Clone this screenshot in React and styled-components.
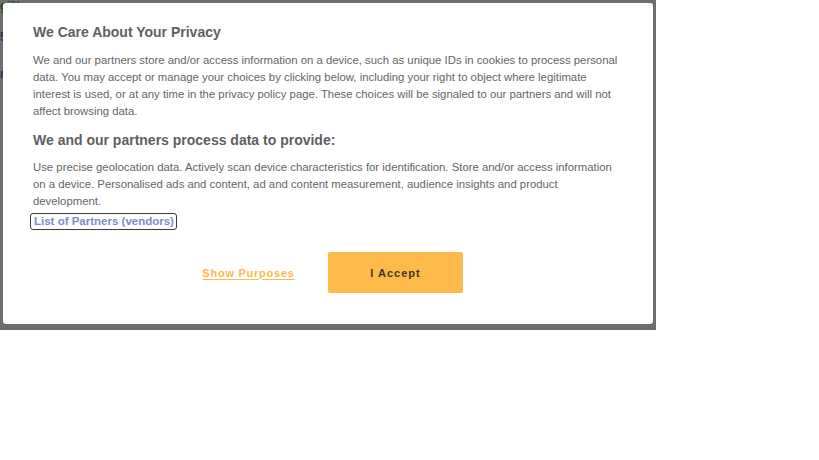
import React from "react";
import styled, { createGlobalStyle } from "styled-components";

const Global = createGlobalStyle`
  html, body { margin: 0; padding: 0; background: #fff; }
  body { font-family: "Liberation Sans", Arial, sans-serif; }
`;

const Page = styled.div`
  position: relative;
  width: 656px;
  height: 330px;
  overflow: hidden;
  background: #fff;
`;

const BehindText = styled.span`
  position: absolute;
  left: ${(p) => p.$x}px;
  top: ${(p) => p.$y}px;
  color: ${(p) => p.$color};
  font-size: ${(p) => p.$size}px;
  font-weight: bold;
  line-height: 1;
`;

const Overlay = styled.div`
  position: absolute;
  inset: 0;
  background: rgba(26, 30, 30, 0.64);
  padding: 3px 3px 6px 3px;
  box-sizing: border-box;
  display: flex;
`;

const Modal = styled.div`
  flex: 1;
  background: #fff;
  border-radius: 3px;
  padding: 20px 30px 0 30px;
  color: #656565;
`;

const Heading = styled.h2`
  margin: ${(p) => p.$m || 0};
  font-size: 14px;
  font-weight: bold;
  line-height: 18px;
  color: #5f5f5f;
`;

const Para = styled.p`
  margin: ${(p) => p.$m};
  font-size: 11.35px;
  line-height: 17px;
  color: #656565;
`;

const PartnersLink = styled.a`
  display: inline-block;
  margin-left: -3px;
  padding: 0 2px 0 3px;
  border: 1px solid #3a3a3a;
  border-radius: 3px;
  font-size: 11.5px;
  font-weight: bold;
  line-height: 15px;
  color: #7b8bd0;
  text-decoration: none;
`;

const Actions = styled.div`
  display: flex;
  justify-content: center;
  align-items: center;
  gap: 12px;
  margin-top: 22px;
  padding-right: 12px;
`;

const TextButton = styled.button`
  width: 135px;
  height: 41px;
  border: none;
  background: none;
  font-family: "Liberation Sans", Arial, sans-serif;
  font-size: 11px;
  font-weight: bold;
  letter-spacing: 0.75px;
  color: #fdb94a;
  text-decoration: underline;
  text-underline-offset: 2px;
  padding: 0;
`;

const AcceptButton = styled.button`
  width: 135px;
  height: 41px;
  border: none;
  border-radius: 2px;
  background: #fdb94a;
  font-family: "Liberation Sans", Arial, sans-serif;
  font-size: 11px;
  font-weight: bold;
  letter-spacing: 1px;
  color: #3b3424;
  padding: 0;
`;

export default function App() {
  return (
    <>
      <Global />
      <Page>
        <BehindText $x={0} $y={0} $color="#2a9a2a" $size={12}>gi%</BehindText>
        <BehindText $x={0} $y={31} $color="#2b5fae" $size={12}>5</BehindText>
        <BehindText $x={0} $y={68} $color="#2b5fae" $size={12}>r</BehindText>
        <Overlay>
          <Modal>
            <Heading>We Care About Your Privacy</Heading>
            <Para $m="11px 0 0 0">
              We and our partners store and/or access information on a device, such as unique IDs in cookies to process personal data. You may accept or manage your choices by clicking below, including your right to object where legitimate interest is used, or at any time in the privacy policy page. These choices will be signaled to our partners and will not affect browsing data.
            </Para>
            <Heading as="h3" $m="11px 0 0 0">We and our partners process data to provide:</Heading>
            <Para $m="10px 0 1px 0">
              Use precise geolocation data. Actively scan device characteristics for identification. Store and/or access information on a device. Personalised ads and content, ad and content measurement, audience insights and product development.
            </Para>
            <PartnersLink href="#">List of Partners (vendors)</PartnersLink>
            <Actions>
              <TextButton>Show Purposes</TextButton>
              <AcceptButton>I Accept</AcceptButton>
            </Actions>
          </Modal>
        </Overlay>
      </Page>
    </>
  );
}
